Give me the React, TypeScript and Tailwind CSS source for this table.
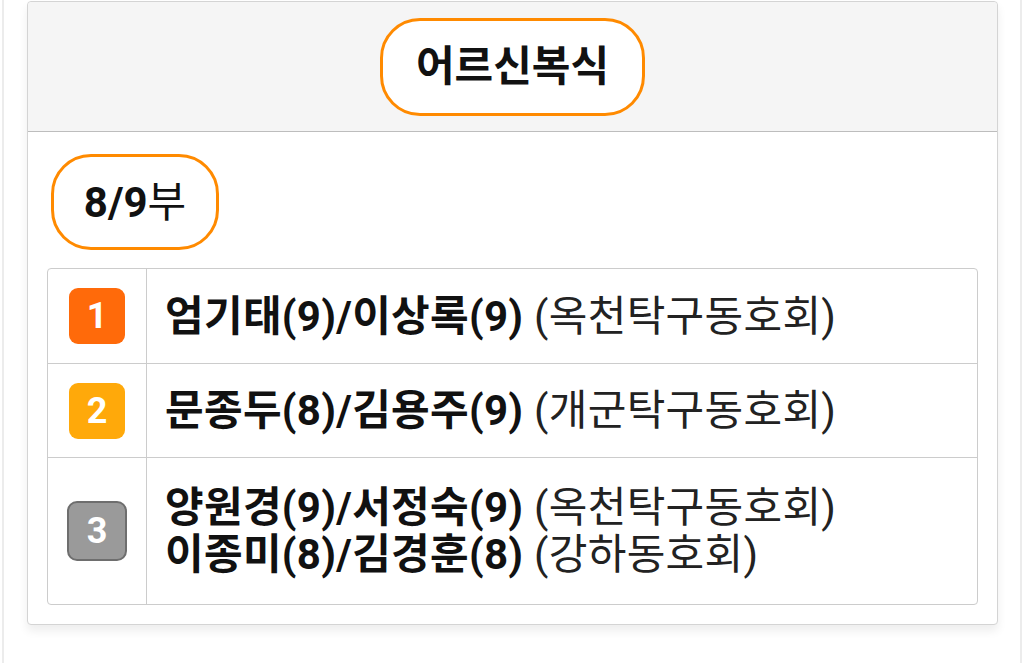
import React from 'react';

interface Team {
  rank: number;
  lines: { names: string; club: string }[];
}

const teams: Team[] = [
  { rank: 1, lines: [{ names: '엄기태(9)/이상록(9)', club: '(옥천탁구동호회)' }] },
  { rank: 2, lines: [{ names: '문종두(8)/김용주(9)', club: '(개군탁구동호회)' }] },
  {
    rank: 3,
    lines: [
      { names: '양원경(9)/서정숙(9)', club: '(옥천탁구동호회)' },
      { names: '이종미(8)/김경훈(8)', club: '(강하동호회)' },
    ],
  },
];

function RankBadge({ rank }: { rank: number }) {
  if (rank === 1) {
    return (
      <div className="w-[56px] h-[56px] rounded-[9px] bg-[#ff6a0a] text-white text-[36px] font-bold flex items-center justify-center">
        1
      </div>
    );
  }
  if (rank === 2) {
    return (
      <div className="w-[56px] h-[56px] rounded-[9px] bg-[#ffa90a] text-white text-[36px] font-bold flex items-center justify-center">
        2
      </div>
    );
  }
  return (
    <div className="w-[60px] h-[60px] rounded-[10px] bg-[#9a9a9a] border-2 border-[#6e6e6e] text-white text-[36px] font-bold flex items-center justify-center">
      {rank}
    </div>
  );
}

export default function App() {
  return (
    <div
      className="w-[1024px] h-[663px] bg-white overflow-hidden"
      style={{ fontFamily: 'Roboto, "Noto Sans CJK KR", sans-serif' }}
    >
      <div className="ml-[2px] mr-[2px] h-full border-x-2 border-[#ececec] pl-[23px] pr-[22px] pt-[1px]">
        <div className="border border-[#d4d4d4] rounded-[4px] bg-white shadow-[0_6px_10px_rgba(0,0,0,0.07)]">
          {/* header */}
          <div className="h-[130px] bg-[#f5f5f5] border-b border-[#bdbdbd] rounded-t-[4px] flex items-center justify-center">
            <div className="h-[98px] px-[33px] border-[3px] border-[#ff8a00] rounded-[40px] bg-white flex items-center justify-center text-[42px] font-bold text-[#111]">
              어르신복식
            </div>
          </div>

          {/* body */}
          <div className="px-[19px] pt-[22px] pb-[19px]">
            <div className="ml-[4px] w-[168px] h-[96px] border-[3px] border-[#ff8a00] rounded-[40px] flex items-center justify-center text-[42px] text-[#111]">
              <span className="font-bold">8/9</span>
              <span className="font-normal">부</span>
            </div>

            <div className="mt-[18px] border border-[#cccccc] rounded-[4px] overflow-hidden">
              {teams.map((t, i) => (
                <div
                  key={t.rank}
                  className={`flex ${i > 0 ? 'border-t border-[#cccccc]' : ''} ${t.lines.length > 1 ? 'h-[147px]' : 'h-[94px]'}`}
                >
                  <div className="w-[99px] shrink-0 border-r border-[#cccccc] flex items-center justify-center">
                    <RankBadge rank={t.rank} />
                  </div>
                  <div className="flex-1 pl-[18px] flex flex-col justify-center text-[42px] leading-[47px] tracking-[0.3px] text-[#111]">
                    {t.lines.map((l) => (
                      <div key={l.names} className="whitespace-nowrap">
                        <span className="font-bold">{l.names}</span>{' '}
                        <span className="font-normal text-[#222]">{l.club}</span>
                      </div>
                    ))}
                  </div>
                </div>
              ))}
            </div>
          </div>
        </div>
      </div>
    </div>
  );
}
